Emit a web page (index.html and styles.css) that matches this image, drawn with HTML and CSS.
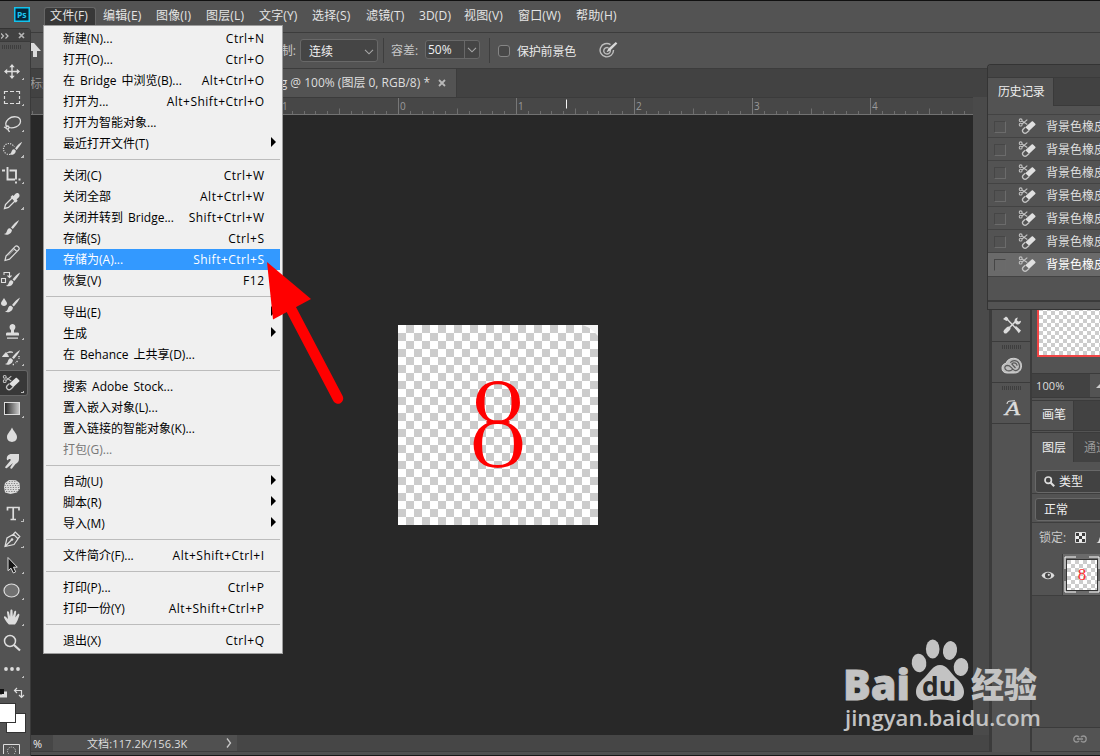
FILE: index.html
```html
<!DOCTYPE html>
<html lang="zh-CN">
<head>
<meta charset="utf-8">
<title>Ps</title>
<link rel="stylesheet" href="styles.css">
</head>
<body>
<svg class="defs" width="0" height="0">
  <defs>
    <symbol id="bg-eraser" viewBox="0 0 20 18">
      <g fill="none" stroke="#c4c4c4" stroke-width="1.100">
        <circle cx="2.800" cy="3" r="1.500"/><circle cx="2.800" cy="7.600" r="1.500"/>
        <path d="M4.300 3.800l5.500 3.600M4.300 6.900l5.500-4.700"/>
        <path d="M7.600 10.300l-2 1.800a2.600 2.600 0 0 0 3.700 3.700l2.400-2.100" stroke-width="1.400"/>
      </g>
      <path d="M7.600 10.400l6.800-6.200c.5-.4 1-.4 1.400 0l2.400 2.400c.4.5.4 1 0 1.400l-6.400 6z" fill="#e0e0e0"/>
    </symbol>
    <symbol id="brush" viewBox="0 0 18 18">
      <path d="M17 1c-3 1.500-6.500 5-8.500 8l1.900 1.700C12.500 8 16 4 17 1zM7.500 9.800C5 9.500 4.500 12 3.800 13.800 3.300 15 2.200 15.800 1 16c3 1.300 7.800.6 8.500-4.400z" fill="#dcdcdc"/>
    </symbol>
    <pattern id="ticks" x="41" y="0" width="118" height="16" patternUnits="userSpaceOnUse">
      <path d="M.5 0V16" stroke="#777"/>
      <path d="M12.500 13v3M24.500 13v3M35.500 13v3M47.500 13v3M71.500 13v3M82.500 13v3M94.500 13v3M106.500 13v3M59.500 10.500V16" stroke="#6e6e6e"/>
    </pattern>
    <filter id="thin"><feMorphology operator="erode" radius="1"/></filter>
  </defs>
</svg>

<div class="app">
  <header class="menubar">
    <svg class="logo" width="16" height="15"><rect x=".75" y=".75" width="14.500" height="13.500" fill="#04283a" stroke="#12c3ee" stroke-width="1.500"/><text x="3" y="11" class="logo-text">Ps</text></svg>
    <nav class="menus"><span class="menu-open">文件(F)</span><span>编辑(E)</span><span>图像(I)</span><span>图层(L)</span><span>文字(Y)</span><span>选择(S)</span><span>滤镜(T)</span><span>3D(D)</span><span>视图(V)</span><span>窗口(W)</span><span>帮助(H)</span></nav>
  </header>

  <div class="options">
    <svg class="home" width="12" height="16"><path d="M5 0l7 8H8v6H4V8H1V0z" fill="#dcdcdc"/></svg>
    <span class="opt-limit">限制:</span>
    <div class="combo">连续<svg width="10" height="6"><path d="M1 .8l4 4 4-4" class="chev"/></svg></div>
    <i class="vsep"></i>
    <span class="opt-tol">容差:</span>
    <div class="numfield"><span>50%</span><b><svg width="10" height="6"><path d="M1 .8l4 4 4-4" class="chev"/></svg></b></div>
    <i class="vsep sep2"></i>
    <i class="check"></i>
    <span class="protect">保护前景色</span>
    <svg class="pressure" width="19" height="17"><g fill="none" stroke="#bdbdbd" stroke-width="1.400"><path d="M11.500 2.600A6.700 6.700 0 1 0 14.500 8"/><path d="M9.500 5.800a3.300 3.300 0 1 0 1.700 2"/></g><path d="M18.300 1.500L16.800 0 9.400 6.500 7.500 10.200l3.800-1.700z" fill="#d8d8d8"/></svg>
  </div>

  <main class="work">
    <section class="doc">
      <div class="tabs">
        <span class="tab-idle">标题-1</span>
        <div class="tab">8.png @ 100% (图层 0, RGB/8) *<svg width="8" height="8"><path d="M1 1l6 6M7 1L1 7" stroke="#b8b8b8" stroke-width="1.800"/></svg></div>
      </div>
      <div class="viewport">
        <svg class="ruler" width="973" height="17">
          <rect width="973" height="17" fill="#474747"/>
          <g transform="translate(3 0)"><rect width="970" height="16" fill="url(#ticks)"/></g>
          <path d="M0 16.500H973" stroke="#727272"/>
          <path d="M566.500 1.500v9" stroke="#f4f4f4"/>
          <g class="ruler-num"><text x="282" y="12">1</text><text x="400" y="12">0</text><text x="518" y="12">1</text><text x="636" y="12">2</text><text x="754" y="12">3</text><text x="872" y="12">4</text></g>
        </svg>
        <div class="canvas"><div class="artboard"><svg width="200" height="200"><path d="M184 0c7 2 11 5 16 11V0z" fill="#f4f4f4"/><g transform="translate(100 142.500) scale(.93 1.020)"><text class="eight" x="0" y="0" text-anchor="middle" filter="url(#thin)">8</text></g></svg></div></div>
      </div>
      <footer class="status"><span class="percent">%</span><div class="docsize"><span>文档:117.2K/156.3K</span><svg width="6" height="10"><path d="M1 .5l3.500 4.500L1 9.500" fill="none" stroke="#c8c8c8" stroke-width="1.300"/></svg></div></footer>
    </section>

    <aside class="dock">
      <div class="dock-cell dock-first"><svg width="20" height="20"><path d="M4.500 3.500l10 10.500" stroke="#dcdcdc" stroke-width="1.300"/><path d="M1 4l3-2.500 2 1.500.3 2L4.500 6zM12.500 12.500l1.500-1.500 5 4.500-2.200 2.700z" fill="#dcdcdc"/><path d="M3.500 16.500L6.500 13.500" stroke="#dcdcdc" stroke-width="4" stroke-linecap="round"/><path d="M6 14l8-8" stroke="#dcdcdc" stroke-width="1.600"/><path d="M13 8c-1-2-.5-5 2.800-5.500l-.9 2.700 1.400 1.400 2.700-.9c0 3-2.500 4.200-4.600 3.500z" fill="#dcdcdc"/></svg></div>
      <div class="dock-cell"><i class="grip"></i><svg width="22" height="18"><path d="M6 16C2.500 16 .8 13.500 1 10.500 1.200 8 3 6.500 5 6.300 6 3 9 1.300 12.500 1.300c4.500 0 8 3 8 7.500s-3 7.200-7 7.200z" fill="#bdbdbd" stroke="#d4d4d4"/><g fill="none" stroke="#5a5a5a" stroke-width="1.200"><path d="M11.800 12.200c-1.800 1.600-4 2-5.800 1.300-3.300-1.400-2.600-5 .5-5.100 1.500 0 2.500.7 3.600 1.900l1.800 1.900c3 3 7 .4 6.600-3.400C18 3.200 12.500 2.200 9.200 5.600"/><path d="M14.500 11L10.800 7c2-2.500 5.400-.5 5.200 1.800"/></g></svg></div>
      <div class="dock-cell"><i class="grip"></i><svg width="20" height="20"><text x="3" y="17" class="glyph-a" textLength="15" lengthAdjust="spacingAndGlyphs">A</text><path d="M5 6c0-2.500 2.500-3.500 8-3.300" stroke="#dcdcdc" fill="none" stroke-width="1.100"/></svg></div>
    </aside>

    <aside class="panels">
      <div class="nav"><div class="nav-thumb"></div></div>
      <div class="zoomrow"><span>100%</span><svg width="9" height="5"><path d="M0 5l5-5h4v5z" fill="#ccc"/></svg></div>
      <div class="ptabs brush-tabs"><span class="on">画笔</span></div>
      <div class="ptabs layer-tabs"><span class="on">图层</span><span class="off">通道</span></div>
      <div class="filter"><div class="pcombo"><svg width="11" height="11"><circle cx="4.200" cy="4.200" r="3.200" fill="none" stroke="#ddd" stroke-width="1.700"/><path d="M6.500 6.500l3.700 3.700" stroke="#ddd" stroke-width="2.200"/></svg>类型</div></div>
      <div class="blend"><div class="pcombo">正常</div></div>
      <div class="lock"><span>锁定:</span><svg width="11" height="11"><path d="M.5.5h10v10H.500z" fill="#3b3b3b" stroke="#ddd"/><path d="M4 1h3v3H4zM1 4h3v3H1zM7 4h3v3H7zM4 7h3v3H4z" fill="#eee"/></svg><svg class="lockbrush" width="4" height="8"><path d="M0 8c3 0 3-4 4-6v6z" fill="#ddd"/></svg></div>
      <div class="layer">
        <div class="eye"><svg width="14" height="9"><path d="M.5 4.500C3.500-.5 10.500-.5 13.500 4.500 10.500 9.500 3.500 9.500.5 4.500z" fill="#ddd"/><circle cx="7" cy="4.500" r="3" fill="#474747"/><circle cx="7.800" cy="3.800" r="1.100" fill="#ddd"/></svg></div>
        <div class="layer-body"><svg width="36" height="37"><path d="M1 13V1h11M25 1h10v12M35 25v11H25M12 36H1V25" fill="none" stroke="#fff"/></svg><div class="thumb">8</div></div>
      </div>
      <div class="layer-space"></div>
      <div class="layer-foot"><svg width="14" height="8"><g fill="none" stroke="#969696" stroke-width="1.300"><path d="M6 2.300C5.500 1.200 4.800 1 3.800 1 2.200 1 .8 2.300.8 4s1.400 3 3 3c1 0 1.700-.3 2.200-1.300M8 2.300C8.500 1.200 9.200 1 10.200 1c1.600 0 3 1.300 3 3s-1.400 3-3 3C9.200 7 8.500 6.700 8 5.700M4 4h6"/></g></svg></div>
    </aside>
  </main>
  <div class="bottom"></div>
</div>

<div class="toolbox">
  <div class="tb-head"><svg width="8" height="6"><path d="M0 .5L2.500 3 0 5.500M4.500.5L7 3 4.500 5.500" stroke="#c0c0c0" stroke-width="1.200" fill="none"/></svg><svg width="7" height="7"><path d="M1 1l5 5M6 1L1 6" stroke="#b4b4b4" stroke-width="1.700"/></svg></div>
  <div class="tb-grip"></div>
  <div class="tool flyout"><svg viewBox="0 0 30 26"><path d="M12 7v13M5.500 13.500h13" stroke="#ddd" stroke-width="1.400"/><path d="M12 6l2.700 3.200H9.300zM12 21l2.700-3.200H9.300zM4 13.500l3.200-2.700v5.400zM20 13.500l-3.200-2.700v5.400z" fill="#ddd"/></svg></div>
  <div class="tool flyout"><svg viewBox="0 0 30 26"><path d="M4.500 10V7.500H8M10 7.500h4M16 7.500h3.500V10M19.500 12v3M19.500 17v2.500H16M14 19.500h-4M8 19.500H4.500V17M4.500 15v-3" fill="none" stroke="#ddd" stroke-width="1.200"/></svg></div>
  <div class="tool flyout"><svg viewBox="0 0 30 26"><g fill="none" stroke="#ddd" stroke-width="1.300"><path d="M9 17.500c4 1.200 11-.8 11.500-6 .2-5.500-8-6-12-2.500-3 2.700-4 6-1 8"/><circle cx="7.500" cy="17.500" r="1.500"/><path d="M8 19c0 2 1 1.500 1.500 3M6 18l-2-1"/></g></svg></div>
  <div class="tool flyout"><svg viewBox="0 0 30 26"><circle cx="9" cy="13" r="5.500" fill="none" stroke="#d8d8d8" stroke-width="1.200" stroke-dasharray="1.200 1.200"/><path d="M11 11h9v9h-9z" fill="#535353"/><use href="#brush" x="8" y="4.500" width="15" height="16"/></svg></div>
  <div class="tool flyout"><svg viewBox="0 0 30 26"><path d="M7.500 5v12.500H15M2 8.500h2.500M9.500 8.500H16v9M16 19.500v2M18.500 17.500h2M4 8.500h1" fill="none" stroke="#ddd" stroke-width="1.900"/></svg></div>
  <div class="tool flyout"><svg viewBox="0 0 30 26"><path d="M13 9l-7.500 7.500-1 4 4-1L16 12z" fill="none" stroke="#ddd" stroke-width="1.300"/><path d="M10.500 9l2-2 1 1 2-2.200c2-2 5.200.5 3.600 3.200L16.500 11.500l1.200 1.300-2 2z" fill="#ddd"/></svg></div>
  <div class="tool"><svg viewBox="0 0 30 26"><use href="#brush" x="3" y="5" width="17" height="17"/></svg></div>
  <div class="tool"><svg viewBox="0 0 30 26"><path d="M5 20.500l1-4.500L15.500 6.200c1.500-1 4.500 1.500 3.500 3.300L9.500 19.200zM13.500 8.200l3.500 3.400" fill="none" stroke="#ddd" stroke-width="1.200"/><path d="M8 15.500l6-6" stroke="#ddd" stroke-width=".8"/></svg></div>
  <div class="tool"><svg viewBox="0 0 30 26"><path d="M1.500 12.500h4v4h-4zM4 9V6.500h5.500V11M7.500 9.500l2 2 2-2" fill="none" stroke="#ddd" stroke-width="1.100"/><use href="#brush" x="5" y="5" width="16" height="17"/></svg></div>
  <div class="tool"><svg viewBox="0 0 30 26"><path d="M4 6c-1.500 2.500-3 4-3 5.500 0 3.300 6 3.300 6 0C7 10 5.500 8.500 4 6z" fill="#ddd"/><use href="#brush" x="4" y="4" width="17" height="18"/></svg></div>
  <div class="tool flyout"><svg viewBox="0 0 30 26"><path d="M11 12c-2.500-2-1.500-6 1.500-6s4 4 1.500 6v2.500h3.500c1 0 1.500.5 1.500 1.500v1.500H6V16c0-1 .5-1.500 1.500-1.500H11zM7 19.500h11v1.200H7z" fill="#ddd"/></svg></div>
  <div class="tool flyout"><svg viewBox="0 0 30 26"><path d="M2.500 12.500L6 8.500l2.500 4zM7 9c2.500-2 4.500-1.500 6-.5" stroke="#ddd" stroke-width="1" fill="#ddd"/><path d="M19 12v3M17.500 17l-2 2M14 20.500h-2" stroke="#ddd" stroke-width="1.400" stroke-dasharray="1.300 1"/><use href="#brush" x="4" y="5" width="17" height="17"/></svg></div>
  <div class="tool flyout selected"><svg viewBox="0 0 30 26"><use href="#bg-eraser" x="2" y="4" width="19" height="17"/></svg></div>
  <div class="tool flyout"><svg viewBox="0 0 30 26"><defs><linearGradient id="fade"><stop stop-color="#222"/><stop offset="1" stop-color="#ccc"/></linearGradient></defs><rect x="4.500" y="6.500" width="15" height="12" fill="url(#fade)" stroke="#ddd"/></svg></div>
  <div class="tool"><svg viewBox="0 0 30 26"><path d="M12 5.500c-2 4.500-5 6-5 9.500 0 6.500 10 6.500 10 0 0-3.500-3-5-5-9.500z" fill="#ddd"/></svg></div>
  <div class="tool"><svg viewBox="0 0 30 26"><path d="M7 12c-1-3.500 1.500-6.200 5-6h7v5c0 3-2 4-3.500 5L12 20.500c-1 .8-2.300-.3-1.500-1.500l2.500-4-6 5c-1.200.8-2.400-.3-1.500-1.500l5-6c1-2-2-2.200-2.500-.2z" fill="#ddd"/></svg></div>
  <div class="tool"><svg viewBox="0 0 30 26"><path d="M5 9l4-3 7 .3 3.500 2.700.5 5.500-3 4-6.500 1.500L5 18.500 4 13z" fill="#ddd"/><g fill="none" stroke="#6a6a6a" stroke-width=".8" stroke-dasharray="1.200 1.400"><path d="M6 9.500h13M4.500 11.500h15M5 13.500h15M5 15.500h14M6 17.500h12M9 7.500h8"/></g></svg></div>
  <div class="tool flyout"><svg viewBox="0 0 30 26"><path d="M7.500 10.500V7.500H19v3M13.200 7v12.500M10.500 19.500h5.500" fill="none" stroke="#ddd" stroke-width="1.700"/></svg></div>
  <div class="tool flyout"><svg viewBox="0 0 30 26"><path d="M5 20.500l2-8.500 6.500-3.700 4.500 4.500-4 5.700zM5.500 20l6-6M13.500 8l1.800-2 4.500 4.500-1.800 2" fill="none" stroke="#ddd" stroke-width="1.200"/><circle cx="12" cy="13.500" r="1.300" fill="#ddd"/></svg></div>
  <div class="tool flyout"><svg viewBox="0 0 30 26"><path d="M8 5.500v13.200l3-2.500 2.300 4.800 2.400-1.200-2.200-4.600h3.800z" fill="#161616" stroke="#ddd" stroke-width="1"/></svg></div>
  <div class="tool flyout"><svg viewBox="0 0 30 26"><ellipse cx="11.500" cy="12.500" rx="7.500" ry="6.500" fill="#717171" stroke="#ddd" stroke-width="1.200"/></svg></div>
  <div class="tool flyout"><svg viewBox="0 0 30 26"><path d="M9 20.500c-1.500-1-4-5-5-6.800-.4-1.500 1.200-2 2-.8l2 2L7 8.500c-.2-1.500 1.500-1.800 1.900-.4l1.200 4.700.3-6.200c0-1.600 2-1.600 2.100 0l.3 6 1.500-5c.4-1.500 2-1 1.900.4l-.9 5.500 2.200-3c.9-1.300 2.300-.5 1.800.9-1 3-2 6.500-4.300 9.100z" fill="#ddd"/></svg></div>
  <div class="tool"><svg viewBox="0 0 30 26"><circle cx="10" cy="11" r="5.500" fill="none" stroke="#ddd" stroke-width="1.500"/><path d="M14 15l6 5.500" stroke="#ddd" stroke-width="2.200"/></svg></div>
  <div class="tool flyout"><svg viewBox="0 0 30 26"><g fill="#ddd"><circle cx="6" cy="13" r="1.900"/><circle cx="12" cy="13" r="1.900"/><circle cx="18" cy="13" r="1.900"/></g></svg></div>
  <svg class="swatches" width="30" height="72"><path d="M2 9.500h5v6H0v-3h2z" fill="#ddd"/><path d="M0 7h4v5H0z" fill="#111"/><path d="M14.500 8.500h7v6M17 6l-2.500 2.500L17 11M19 13l2.500 2.500L24 13" fill="none" stroke="#ddd" stroke-width="1.200"/><rect x="6.500" y="31.500" width="19" height="19" fill="#fff" stroke="#333"/><rect x="-2.500" y="21.500" width="18" height="19" fill="#fff" stroke="#333"/><path d="M3.500 76V62.500h16V76" fill="none" stroke="#ddd"/><circle cx="11.500" cy="69" r="4" fill="none" stroke="#ddd" stroke-dasharray="1 1.200"/></svg>
</div>

<div class="history">
  <div class="h-top"></div>
  <div class="h-tabs"><span>历史记录</span><i></i></div>
  <div class="h-list">
    <div class="h-row"><i></i><svg width="20" height="18"><use href="#bg-eraser"/></svg><span>背景色橡皮擦</span></div>
    <div class="h-row"><i></i><svg width="20" height="18"><use href="#bg-eraser"/></svg><span>背景色橡皮擦</span></div>
    <div class="h-row"><i></i><svg width="20" height="18"><use href="#bg-eraser"/></svg><span>背景色橡皮擦</span></div>
    <div class="h-row"><i></i><svg width="20" height="18"><use href="#bg-eraser"/></svg><span>背景色橡皮擦</span></div>
    <div class="h-row"><i></i><svg width="20" height="18"><use href="#bg-eraser"/></svg><span>背景色橡皮擦</span></div>
    <div class="h-row"><i></i><svg width="20" height="18"><use href="#bg-eraser"/></svg><span>背景色橡皮擦</span></div>
    <div class="h-row current"><i></i><svg width="20" height="18"><use href="#bg-eraser"/></svg><span>背景色橡皮擦</span></div>
  </div>
  <div class="h-foot"></div>
</div>

<div class="dropdown">
  <div class="item"><span>新建(N)...</span><kbd>Ctrl+N</kbd></div>
  <div class="item"><span>打开(O)...</span><kbd>Ctrl+O</kbd></div>
  <div class="item"><span>在 Bridge 中浏览(B)...</span><kbd>Alt+Ctrl+O</kbd></div>
  <div class="item"><span>打开为...</span><kbd>Alt+Shift+Ctrl+O</kbd></div>
  <div class="item"><span>打开为智能对象...</span></div>
  <div class="item sub"><span>最近打开文件(T)</span></div>
  <hr>
  <div class="item"><span>关闭(C)</span><kbd>Ctrl+W</kbd></div>
  <div class="item"><span>关闭全部</span><kbd>Alt+Ctrl+W</kbd></div>
  <div class="item"><span>关闭并转到 Bridge...</span><kbd>Shift+Ctrl+W</kbd></div>
  <div class="item"><span>存储(S)</span><kbd>Ctrl+S</kbd></div>
  <div class="item hot"><span>存储为(A)...</span><kbd>Shift+Ctrl+S</kbd></div>
  <div class="item"><span>恢复(V)</span><kbd>F12</kbd></div>
  <hr>
  <div class="item sub"><span>导出(E)</span></div>
  <div class="item sub"><span>生成</span></div>
  <div class="item"><span>在 Behance 上共享(D)...</span></div>
  <hr>
  <div class="item"><span>搜索 Adobe Stock...</span></div>
  <div class="item"><span>置入嵌入对象(L)...</span></div>
  <div class="item"><span>置入链接的智能对象(K)...</span></div>
  <div class="item disabled"><span>打包(G)...</span></div>
  <hr>
  <div class="item sub"><span>自动(U)</span></div>
  <div class="item sub"><span>脚本(R)</span></div>
  <div class="item sub"><span>导入(M)</span></div>
  <hr>
  <div class="item"><span>文件简介(F)...</span><kbd>Alt+Shift+Ctrl+I</kbd></div>
  <hr>
  <div class="item"><span>打印(P)...</span><kbd>Ctrl+P</kbd></div>
  <div class="item"><span>打印一份(Y)</span><kbd>Alt+Shift+Ctrl+P</kbd></div>
  <hr>
  <div class="item"><span>退出(X)</span><kbd>Ctrl+Q</kbd></div>
</div>

<svg class="pointer" width="80" height="145"><path d="M72 137.500L24 46" stroke="#f00" stroke-width="10.500" stroke-linecap="round"/><path d="M1 1l44 37-38 20.500z" fill="#f00"/></svg>

<svg class="watermark" width="210" height="100">
  <g fill="#c3c3c3">
    <text class="wm-bai" x="3" y="65" textLength="67" lengthAdjust="spacingAndGlyphs">Bai</text>
    <ellipse cx="79" cy="28" rx="7.300" ry="9.300" transform="rotate(-8 79 28)"/>
    <ellipse cx="92.700" cy="14" rx="6.800" ry="9.500"/>
    <ellipse cx="110" cy="15.500" rx="7" ry="9.500" transform="rotate(10 110 15.500)"/>
    <ellipse cx="121" cy="32" rx="7.300" ry="9" transform="rotate(5 121 32)"/>
    <path d="M100 30c7 0 10 7 15 12 6 5 9 10 9 15 0 7-6 10-13 8.500-7-1.500-15-1.500-22 0-7 1.500-13-2-13-8.500s4-10 9-15c5-5 8-12 15-12z"/>
    <text class="wm-cn" x="131" y="63" textLength="66" lengthAdjust="spacingAndGlyphs">经验</text>
    <text class="wm-url" x="5" y="91" textLength="196" lengthAdjust="spacingAndGlyphs">jingyan.baidu.com</text>
  </g>
  <text class="wm-du" x="82" y="61" textLength="34" lengthAdjust="spacingAndGlyphs">du</text>
</svg>
</body>
</html>
```

FILE: styles.css
```css
* { box-sizing: border-box; }
html, body { margin: 0; height: 100%; overflow: hidden; }
body {
  position: relative;
  width: 1100px;
  height: 756px;
  background: #535353;
  color: #dedede;
  font: 12px/16px "Open Sans", "Noto Sans CJK SC", sans-serif;
  white-space: nowrap;
}
svg { display: block; flex: none; }
i { display: block; flex: none; }
.defs { position: absolute; }
.chev { fill: none; stroke: #a8a8a8; stroke-width: 1.1; }

.app { display: flex; flex-direction: column; height: 756px; }
.menubar { display: flex; height: 33px; flex: none; border-top: 1px solid #101010; border-bottom: 1px solid #3c3c3c; padding: 6px 0 0 14px; }
.logo-text { font: bold 8.500px "Open Sans", sans-serif; fill: #1fc8f2; }
.menus { display: grid; grid-template-columns: 53px 53px 50px 53px 53px 54px 53px 45px 54px 58px 60px; margin-left: 14px; height: 18px; color: #e4e4e4; line-height: 17px; letter-spacing: .15px; }
.menus span { padding-left: 6px; }
.menus .menu-open { background: #383838; border: 1px solid #666; border-bottom: 0; border-radius: 3px 3px 0 0; padding-left: 5px; width: 52px; line-height: 15px; }

.options { display: flex; align-items: center; height: 36px; flex: none; padding-left: 29px; border-bottom: 1px solid #3c3c3c; }
.home { margin-right: 222px; }
.opt-limit { width: 37px; color: #c8c8c8; text-align: right; padding-right: 4px; }
.combo { display: flex; justify-content: space-between; align-items: center; width: 78px; height: 23px; background: #454545; border: 1px solid #686868; border-radius: 3px; padding: 2px 3px 0 8px; color: #f0f0f0; }
.vsep { width: 1px; height: 25px; background: #3e3e3e; margin-left: 5px; }
.opt-tol { width: 34px; margin-left: 7px; color: #c8c8c8; }
.numfield { display: flex; width: 55px; height: 19px; margin-top: -2px; background: #454545; border: 1px solid #686868; border-radius: 3px; line-height: 17px; color: #f0f0f0; }
.numfield span { width: 39px; padding-left: 2px; border-right: 1px solid #686868; }
.numfield b { display: grid; place-items: center; flex: 1; }
.sep2 { margin-left: 9px; }
.check { width: 12px; height: 12px; border: 1px solid #858585; border-radius: 3px; background: #484848; margin: 0 7px 0 8px; }
.protect { width: 82px; color: #e8e8e8; padding-top: 2px; letter-spacing: -.2px; }

.work { display: flex; height: 683px; flex: none; }
.doc { display: flex; flex-direction: column; width: 989px; flex: none; background: #4a4a4a; }
.tabs { display: flex; height: 28px; background: #424242; flex: none; line-height: 30px; }
.tab-idle { width: 60px; padding-left: 30px; overflow: hidden; color: #999; }
.tab { display: flex; align-items: center; justify-content: flex-end; gap: 8px; width: 397px; background: #535353; border-right: 1px solid #3c3c3c; padding-right: 10px; }
.viewport { width: 973px; height: 638px; border-top: 1px solid #3b3b3b; flex: none; background: #282828; }
.ruler-num { font: 10px "Open Sans", sans-serif; fill: #9a9a9a; }
.canvas { padding: 210px 0 0 398px; }
.artboard { width: 200px; height: 200px; background: repeating-conic-gradient(#fff 0 25%, #ccc 0 50%) 0 0 / 16px 16px; background-position: 8px 0; }
.eight { font: 129px "Liberation Serif", serif; fill: #f00; }
.status { display: flex; height: 17px; background: #464646; padding-left: 33px; line-height: 17px; font-size: 11px; border-bottom: 1px solid #3c3c3c; }
.percent { width: 20px; color: #eee; }
.docsize { display: flex; align-items: center; width: 184px; padding: 0 5px 0 34px; justify-content: space-between; background: #505050; letter-spacing: .12px; }

.dock { width: 41px; flex: none; border: solid #3b3b3b; border-width: 0 0 0 3px; background: #535353; }
.dock-cell { display: flex; flex-direction: column; align-items: center; height: 41px; border-bottom: 1px solid #3b3b3b; padding: 3px 0 3px 1px; gap: 8px; }
.dock-first { height: 273px; padding-top: 246px; }
.grip { width: 19px; height: 4px; background: repeating-linear-gradient(90deg, #3e3e3e 0 1px, transparent 1px 2px); }
.glyph-a { font: italic 19px "Liberation Serif", serif; fill: #dcdcdc; stroke: #dcdcdc; stroke-width: .4px; }

.panels { width: 70px; overflow: hidden; border-left: 2px solid #3b3b3b; }
.nav { height: 304px; padding-left: 5px; }
.nav-thumb { height: 288px; border: solid #f14646; border-width: 0 0 2px 2px; background: repeating-conic-gradient(#ccc 0 25%, #fff 0 50%) 0 2px / 8px 8px; }
.zoomrow { display: flex; align-items: center; height: 25px; border: solid #3b3b3b; border-width: 1px 0; justify-content: space-between; font-size: 11px; }
.zoomrow span { width: 58px; background: #424242; padding-left: 4px; line-height: 23px; letter-spacing: .1px; }
.zoomrow svg { margin-right: -5px; }
.ptabs { display: flex; background: #424242; border-bottom: 1px solid #3b3b3b; }
.brush-tabs { margin-top: 2px; height: 31px; border-top: 1px solid #3b3b3b; line-height: 27px; }
.ptabs .on { flex: none; background: #535353; border-right: 1px solid #3b3b3b; width: 42px; padding-left: 10px; color: #eee; }
.ptabs .off { color: #999; padding-left: 10px; }
.layer-tabs { margin-top: 1px; height: 30px; border-top: 1px solid #3b3b3b; border-bottom: 0; line-height: 29px; }
.filter { height: 32px; padding: 8px 0 0 3px; border-bottom: 1px solid #3e3e3e; }
.pcombo { display: flex; align-items: center; gap: 4px; height: 23px; width: 80px; padding-left: 8px; background: #424242; border: 1px solid #686868; border-radius: 3px; color: #eee; }
.blend { height: 29px; padding: 4px 0 0 3px; border-bottom: 1px solid #3e3e3e; }
.blend .pcombo { padding-top: 1px; }
.lock { display: flex; align-items: center; height: 31px; padding: 0 0 2px 7px; color: #c8c8c8; }
.lock span { width: 37px; }
.lockbrush { margin: 3px 0 0 10px; }
.layer { display: flex; height: 42px; border-bottom: 1px solid #3e3e3e; }
.eye { display: grid; place-items: center; width: 31px; border-right: 1px solid #3e3e3e; flex: none; padding: 2px 0 0 1px; }
.layer-body { display: grid; width: 40px; background: #6b6b6b; place-items: center start; padding-left: 1px; flex: none; }
.layer-body > * { grid-area: 1 / 1; }
.thumb { width: 32px; height: 32px; margin-left: 2px; border: 1px solid #333; color: #f33; font: 17px/30px "Liberation Serif", serif; text-align: center; background: repeating-conic-gradient(#fff 0 25%, #ccc 0 50%) 0 0 / 8px 8px; }
.layer-space { height: 132px; background: #4b4b4b; border-bottom: 1px solid #3b3b3b; }
.layer-foot { height: 24px; padding: 7px 0 0 41px; border-bottom: 1px solid #3b3b3b; }
.bottom { height: 4px; background: #505050; border-bottom: 1px solid #161616; }

.toolbox { position: absolute; left: 0; top: 28px; width: 31px; height: 728px; background: #535353; border-right: 1px solid #3a3a3a; border-top: 1px solid #333; border-top-right-radius: 4px; overflow: hidden; }
.tb-head { display: flex; justify-content: space-between; align-items: center; height: 13px; background: #424242; border-bottom: 1px solid #3a3a3a; padding: 1px 5px 0 1px; }
.tb-grip { width: 19px; height: 4px; margin: 3px 0 9px 2px; background: repeating-linear-gradient(90deg, #3e3e3e 0 1px, transparent 1px 2px); }
.tool { position: relative; width: 30px; height: 26px; }
.tool svg { width: 30px; height: 26px; }
.flyout::after { content: ""; position: absolute; left: 21px; top: 19px; width: 3px; height: 3px; background: linear-gradient(135deg, transparent 50%, #bbb 50%); }
.selected { width: 28px; background: #383838; border: 1px solid #666; border-left: 0; border-radius: 0 3px 3px 0; }
.selected svg { margin-top: -1px; }

.history { position: absolute; left: 987px; top: 64px; width: 113px; height: 246px; overflow: hidden; background: #535353; border: solid #343434; border-width: 1px 0 1px 1px; border-top-left-radius: 4px; }
.h-top { height: 13px; background: #454545; border-bottom: 1px solid #3b3b3b; }
.h-tabs { display: flex; height: 37px; border-bottom: 1px solid #434343; line-height: 28px; }
.h-tabs span { width: 65px; padding-left: 10px; color: #eee; letter-spacing: -.4px; }
.h-tabs i { flex: 1; height: 28px; background: #424242; border: solid #3a3a3a; border-width: 0 0 1px 1px; }
.h-row { display: flex; align-items: center; height: 23px; border-bottom: 1px solid #434343; padding: 2px 0 0 6px; }
.h-row i { width: 12px; height: 12px; border: 1px solid; border-color: #464646 #6b6b6b #6b6b6b #464646; margin-right: 12px; }
.h-row svg { width: 19px; margin: -2px 9px 0 0; }
.h-row.current { background: #6a6a6a; color: #fff; height: 24px; padding-top: 1px; }
.h-foot { height: 25px; border-bottom: 2px solid #3b3b3b; }

.dropdown { position: absolute; left: 43px; top: 25px; width: 240px; height: 629px; padding: 2px 2px 0; background: #f0f0f0; border: 1px solid #9d9d9d; color: #000; word-spacing: 2px; }
.item { display: flex; justify-content: space-between; align-items: center; height: 21px; padding: 0 16px 0 17px; position: relative; }
.item kbd { font: inherit; letter-spacing: .5px; margin-right: -.5px; }
.hot { background: #3399ff; color: #fff; width: 234px; }
.disabled { color: #777; }
.sub::after { content: ""; position: absolute; right: 4px; top: 4px; border: solid transparent; border-width: 5px 0 5px 5px; border-left-color: #000; }
.dropdown hr { height: 11px; margin: 0; border: 0; background: linear-gradient(#bcbcbc, #bcbcbc) 0 5px / 100% 1px no-repeat; }

.pointer { position: absolute; left: 266px; top: 261px; }
.watermark { position: absolute; left: 840px; top: 635px; }
.wm-bai { font: 800 43px "Open Sans", sans-serif; stroke: #c3c3c3; stroke-width: .8px; }
.wm-cn { font: 900 35px "Noto Sans CJK SC", sans-serif; }
.wm-url { font: 600 22px "Open Sans", sans-serif; }
.wm-du { font: bold 27px "Open Sans", sans-serif; fill: #282828; }
```
